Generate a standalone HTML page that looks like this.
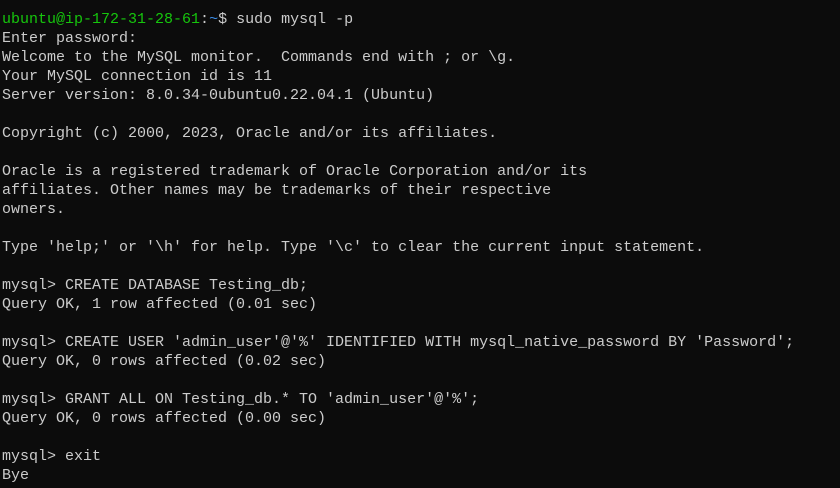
<!DOCTYPE html>
<html><head><style>
html,body{margin:0;padding:0;background:#0c0c0c;width:840px;height:488px;overflow:hidden}
pre{margin:0;padding:10px 0 0 2px;font-family:"Liberation Mono",monospace;font-size:15px;line-height:19px;color:#cccccc;white-space:pre}
.g{color:#16c60c}.b{color:#3b8eea}
</style></head><body><pre><span class="g">ubuntu@ip-172-31-28-61</span>:<span class="b">~</span>$ sudo mysql -p
Enter password:
Welcome to the MySQL monitor.  Commands end with ; or \g.
Your MySQL connection id is 11
Server version: 8.0.34-0ubuntu0.22.04.1 (Ubuntu)

Copyright (c) 2000, 2023, Oracle and/or its affiliates.

Oracle is a registered trademark of Oracle Corporation and/or its
affiliates. Other names may be trademarks of their respective
owners.

Type 'help;' or '\h' for help. Type '\c' to clear the current input statement.

mysql> CREATE DATABASE Testing_db;
Query OK, 1 row affected (0.01 sec)

mysql> CREATE USER 'admin_user'@'%' IDENTIFIED WITH mysql_native_password BY 'Password';
Query OK, 0 rows affected (0.02 sec)

mysql> GRANT ALL ON Testing_db.* TO 'admin_user'@'%';
Query OK, 0 rows affected (0.00 sec)

mysql> exit
Bye
</pre></body></html>
